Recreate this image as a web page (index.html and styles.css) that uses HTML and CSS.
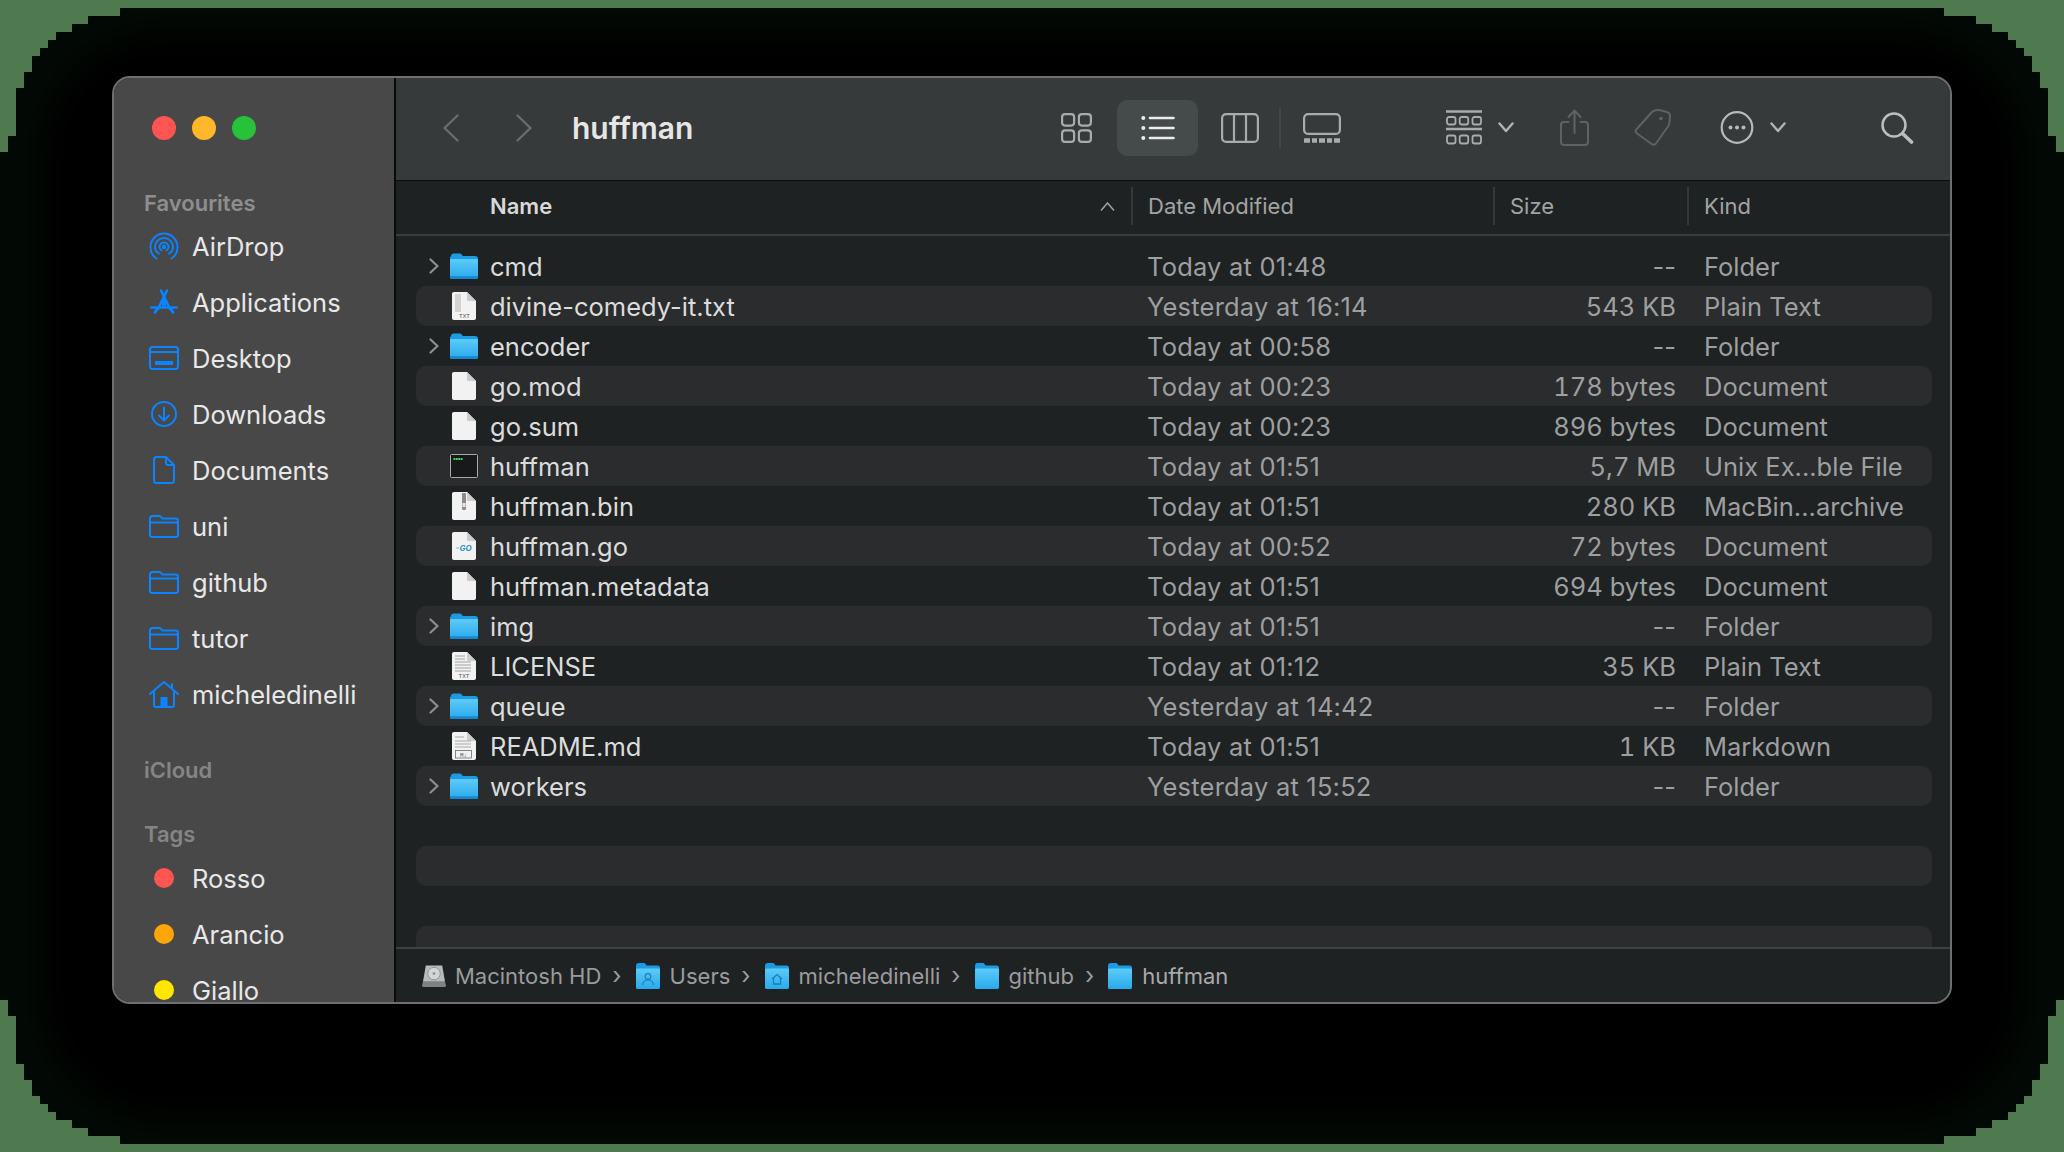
FILE: index.html
```html
<!doctype html>
<html lang="en">
<head>
	<title>huffman</title>
	<meta charset="utf-8">
	<link rel="stylesheet" href="styles.css">
</head>
<body>

	<!-- black pixel backdrop behind the window -->
	<svg class="backdrop" width="2064" height="1152" viewBox="0 0 2064 1152">
		<defs><filter id="soft"><feGaussianBlur stdDeviation="12"/></filter></defs>
		<polygon fill="#020803" points="0,152 8,152 8,136 16,136 16,88 24,88 24,72 32,72 32,56 40,56 40,48 48,48 48,40 56,40 56,32 72,32 72,24 88,24 88,16 120,16 120,8 1944,8 1944,16 1976,16 1976,24 1992,24 1992,32 2008,32 2008,40 2016,40 2016,48 2024,48 2024,56 2032,56 2032,72 2040,72 2040,88 2048,88 2048,136 2056,136 2056,152 2064,152 2064,1000 2056,1000 2056,1016 2048,1016 2048,1064 2040,1064 2040,1080 2032,1080 2032,1096 2024,1096 2024,1104 2016,1104 2016,1112 2008,1112 2008,1120 1992,1120 1992,1128 1976,1128 1976,1136 1944,1136 1944,1144 120,1144 120,1136 88,1136 88,1128 72,1128 72,1120 56,1120 56,1112 48,1112 48,1104 40,1104 40,1096 32,1096 32,1080 24,1080 24,1064 16,1064 16,1016 8,1016 8,1000 0,1000"/>
		<rect x="44" y="36" width="1976" height="1080" rx="120" fill="#000" filter="url(#soft)"/>
	</svg>

	<!-- shared icons -->
	<svg class="defs" width="0" height="0">
		<defs>
			<linearGradient id="folderfill" x1="0" y1="0" x2="0" y2="1">
				<stop offset="0" stop-color="#5ccbf8"/>
				<stop offset="1" stop-color="#2aa9ec"/>
			</linearGradient>
		</defs>
		<symbol id="folder" viewBox="0 0 28 26">
			<path d="M1 3.500C1 1.600 1.800 .5 3.500 .5h6c1.200 0 1.800.5 2.500 1.400l.8 1.100H25c1.500 0 3 .8 3 2.500V24c0 1.200-.8 2-2 2H2c-1.200 0-2-.8-2-2V4z" fill="#1d9be2"/>
			<path d="M0 7.500C0 6.500.6 6 1.600 6h24.800c1 0 1.600.5 1.600 1.500V24c0 1.200-.8 2-2 2H2c-1.200 0-2-.8-2-2z" fill="url(#folderfill)"/>
			<path d="M0 24c0 1.200.8 2 2 2h24c1.200 0 2-.8 2-2v-.8H0z" fill="#1588d0"/>
		</symbol>
		<symbol id="doc" viewBox="0 0 24 28">
			<path d="M2 0h13l9 9v17c0 1.200-.8 2-2 2H2c-1.200 0-2-.8-2-2V2C0 .8.8 0 2 0z" fill="#f2f2f2"/>
			<path d="M15 0l9 9h-7.500c-1 0-1.500-.5-1.500-1.500z" fill="#cdcdcd"/>
		</symbol>
		<symbol id="chevron-r" viewBox="0 0 10 16">
			<path d="M1.500 1.500L8.500 8l-7 6.500" fill="none" stroke="#8d8f90" stroke-width="2.200" stroke-linecap="round" stroke-linejoin="round"/>
		</symbol>
		<symbol id="down" viewBox="0 0 16 11">
			<path d="M1.500 1.500L8 9l6.500-7.500" fill="none" stroke="#b2b4b4" stroke-width="2.400" stroke-linecap="round" stroke-linejoin="round"/>
		</symbol>
		<symbol id="side-folder" viewBox="0 0 30 23">
			<path d="M1 20V3.500C1 2 2 1 3.500 1h6.300c1 0 1.500.3 2.200 1l1.500 1.600H26.500C28 3.600 29 4.600 29 6v14c0 1.200-1 2-2.200 2H3.200C2 22 1 21.200 1 20zM1 7.500h28" fill="none" stroke="#0a84ff" stroke-width="2"/>
		</symbol>
		<symbol id="path-folder" viewBox="0 0 24 26">
			<path d="M0 3C0 1.200 1 0 2.500 0h5c1 0 1.600.4 2.200 1.200l.8 1.300H21.500C23 2.500 24 3.300 24 5v19c0 1.200-.8 2-2 2H2c-1.200 0-2-.8-2-2z" fill="#1d9be2"/>
			<path d="M0 7c0-1 .6-1.500 1.500-1.500h21c.9 0 1.500.5 1.500 1.500v17c0 1.200-.8 2-2 2H2c-1.200 0-2-.8-2-2z" fill="url(#folderfill)"/>
		</symbol>
	</svg>

	<div class="window">

		<aside class="sidebar">
			<div class="lights">
				<span class="light red"></span>
				<span class="light amber"></span>
				<span class="light green"></span>
			</div>

			<h3 class="side-head">Favourites</h3>
			<div class="side-item">
				<span class="side-icon">
					<svg width="30" height="28" viewBox="0 0 30 28" fill="none" stroke="#0a84ff" stroke-width="2" stroke-linecap="round">
						<path d="M7.500 26.500C3.500 24 1.500 19.500 1.500 15a13.500 13.500 0 0 1 27 0c0 4.500-2 9-6 11.500"/>
						<path d="M10 21.500C7.500 20 6 17.500 6 15a9 9 0 0 1 18 0c0 2.500-1.500 5-4 6.500"/>
						<path d="M12.500 18.500C11 17.500 10.500 16.300 10.500 15a4.500 4.500 0 0 1 9 0c0 1.300-.5 2.500-2 3.500"/>
						<circle cx="15" cy="15" r="1.200" fill="#0a84ff"/>
					</svg>
				</span>
				AirDrop
			</div>
			<div class="side-item">
				<span class="side-icon">
					<svg width="28" height="26" viewBox="0 0 28 26" fill="none" stroke="#0a84ff" stroke-width="2.600" stroke-linecap="round">
						<path d="M11 1.500L20 20"/>
						<path d="M17 1.500L8 20"/>
						<path d="M1.500 18.500h25"/>
						<path d="M5 23.500l2-3.500M23 23.500l-2-3.500"/>
						<path d="M10 12l4-3 4 3-3 6h-2z" fill="#0a84ff" stroke="none"/>
					</svg>
				</span>
				Applications
			</div>
			<div class="side-item">
				<span class="side-icon">
					<svg width="30" height="24" viewBox="0 0 30 24" fill="none" stroke="#0a84ff" stroke-width="2">
						<rect x="1" y="1" width="28" height="22" rx="2.500"/>
						<path d="M1 6h28"/>
						<rect x="6" y="15" width="18" height="4" fill="#0a84ff" stroke="none"/>
					</svg>
				</span>
				Desktop
			</div>
			<div class="side-item">
				<span class="side-icon">
					<svg width="26" height="26" viewBox="0 0 26 26" fill="none" stroke="#0a84ff" stroke-width="2" stroke-linecap="round" stroke-linejoin="round">
						<circle cx="13" cy="13" r="12"/>
						<path d="M13 6.500v12.500M8 14.500l5 5 5-5"/>
					</svg>
				</span>
				Downloads
			</div>
			<div class="side-item">
				<span class="side-icon">
					<svg width="22" height="28" viewBox="0 0 22 28" fill="none" stroke="#0a84ff" stroke-width="2" stroke-linejoin="round">
						<path d="M3.500 1H13l8 8v15.500c0 1.500-1 2.500-2.500 2.500h-15C2 27 1 26 1 24.500v-21C1 2 2 1 3.500 1z"/>
						<path d="M13 1v6c0 1.300.7 2 2 2h6"/>
					</svg>
				</span>
				Documents
			</div>
			<div class="side-item">
				<span class="side-icon"><svg class="ic-side-folder"><use href="#side-folder"/></svg></span>
				uni
			</div>
			<div class="side-item">
				<span class="side-icon"><svg class="ic-side-folder"><use href="#side-folder"/></svg></span>
				github
			</div>
			<div class="side-item">
				<span class="side-icon"><svg class="ic-side-folder"><use href="#side-folder"/></svg></span>
				tutor
			</div>
			<div class="side-item">
				<span class="side-icon">
					<svg width="30" height="27" viewBox="0 0 30 27" fill="none" stroke="#0a84ff" stroke-width="2" stroke-linecap="round" stroke-linejoin="round">
						<path d="M1 13L15 1l14 12"/>
						<path d="M5 10.500V24c0 1.300.7 2 2 2h16c1.300 0 2-.7 2-2V10.500"/>
						<rect x="11.500" y="16" width="7" height="10" fill="#0a84ff" stroke="none"/>
						<path d="M23 3v4"/>
					</svg>
				</span>
				micheledinelli
			</div>

			<h3 class="side-head icloud">iCloud</h3>

			<h3 class="side-head tags">Tags</h3>
			<div class="side-item"><span class="side-icon"><span class="tag rosso"></span></span>Rosso</div>
			<div class="side-item"><span class="side-icon"><span class="tag arancio"></span></span>Arancio</div>
			<div class="side-item"><span class="side-icon"><span class="tag giallo"></span></span>Giallo</div>
		</aside>

		<main class="main">

			<header class="toolbar">
				<div class="tb-left">
					<svg class="back" width="16" height="28" viewBox="0 0 16 28" fill="none" stroke="#686c6d" stroke-width="2.400" stroke-linecap="round" stroke-linejoin="round"><path d="M14.500 1.500L1.500 14l13 12.500"/></svg>
					<svg class="forward" width="16" height="28" viewBox="0 0 16 28" fill="none" stroke="#686c6d" stroke-width="2.400" stroke-linecap="round" stroke-linejoin="round"><path d="M1.500 1.500L14.500 14l-13 12.500"/></svg>
					<span class="title">huffman</span>
				</div>

				<div class="views">
					<span class="view">
						<svg width="31" height="30" viewBox="0 0 31 30" fill="none" stroke="#a9acac" stroke-width="2.200">
							<rect x="1.100" y="1.100" width="12" height="11.500" rx="3"/>
							<rect x="17.900" y="1.100" width="12" height="11.500" rx="3"/>
							<rect x="1.100" y="17.400" width="12" height="11.500" rx="3"/>
							<rect x="17.900" y="17.400" width="12" height="11.500" rx="3"/>
						</svg>
					</span>
					<span class="view active">
						<svg width="34" height="24" viewBox="0 0 34 24" fill="none" stroke="#ececec" stroke-width="2.600" stroke-linecap="round">
							<path d="M9 2h23.500M9 12h23.500M9 22h23.500"/>
							<circle cx="2.300" cy="2" r="2" fill="#ececec" stroke="none"/>
							<circle cx="2.300" cy="12" r="2" fill="#ececec" stroke="none"/>
							<circle cx="2.300" cy="22" r="2" fill="#ececec" stroke="none"/>
						</svg>
					</span>
					<span class="view">
						<svg class="columns" width="38" height="30" viewBox="0 0 38 30" fill="none" stroke="#a9acac" stroke-width="2.200">
							<rect x="1.100" y="1.100" width="35.800" height="27.800" rx="4"/>
							<path d="M13 1v28M25 1v28"/>
						</svg>
					</span>
					<span class="view-sep"></span>
					<span class="view">
						<svg width="38" height="30" viewBox="0 0 38 30" fill="none" stroke="#a9acac" stroke-width="2.200">
							<rect x="1.100" y="1.100" width="35.800" height="19.800" rx="4"/>
							<path d="M1 27.500h6M9 27.500h5M16 27.500h6M24 27.500h5M31 27.500h6" stroke-width="4.500"/>
						</svg>
					</span>
				</div>

				<svg class="group" width="36" height="35" viewBox="0 0 36 35" fill="none" stroke="#a9acac">
					<path d="M0 1.500h36M0 19h36" stroke-width="2.600"/>
					<g stroke-width="1.800">
						<rect x="1" y="7" width="8.500" height="7.500" rx="2"/>
						<rect x="13.700" y="7" width="8.500" height="7.500" rx="2"/>
						<rect x="26.500" y="7" width="8.500" height="7.500" rx="2"/>
						<rect x="1" y="25.500" width="8.500" height="8" rx="2"/>
						<rect x="13.700" y="25.500" width="8.500" height="8" rx="2"/>
						<rect x="26.500" y="25.500" width="8.500" height="8" rx="2"/>
					</g>
				</svg>
				<svg class="caret"><use href="#down"/></svg>

				<svg class="share" width="29" height="37" viewBox="0 0 29 37" fill="none" stroke="#5e6263" stroke-width="2" stroke-linecap="round" stroke-linejoin="round">
					<path d="M8.500 13H4c-2 0-3 1-3 3v17c0 2 1 3 3 3h21c2 0 3-1 3-3V16c0-2-1-3-3-3h-4.500"/>
					<path d="M14.500 24V2M8.500 8l6-6.500 6 6.500"/>
				</svg>
				<svg class="tagbtn" width="37" height="37" viewBox="0 0 37 37" fill="none" stroke="#5e6263" stroke-width="2" stroke-linejoin="round">
					<path d="M18 3C20 1 22 .8 25 1L33 3C35 3.500 36 5 36 7L35.500 13C35.400 15 35 16 34 17.500L22 34.500C21 36 19.500 36.200 18 35.200L3 24.500C1.500 23.500 1.300 22 2.300 20.500z"/>
					<circle cx="27" cy="9.500" r="1.800" fill="#5e6263" stroke="none"/>
				</svg>
				<svg class="more" width="34" height="33" viewBox="0 0 34 33" fill="none" stroke="#b8baba" stroke-width="2.200">
					<circle cx="17" cy="16.500" r="15.300"/>
					<g fill="#b8baba" stroke="none">
						<circle cx="10.500" cy="16.500" r="2"/>
						<circle cx="17" cy="16.500" r="2"/>
						<circle cx="23.500" cy="16.500" r="2"/>
					</g>
				</svg>
				<svg class="caret"><use href="#down"/></svg>

				<svg class="search" width="33" height="32" viewBox="0 0 33 32" fill="none" stroke="#bcbebe" stroke-linecap="round">
					<circle cx="13" cy="13" r="11.500" stroke-width="2.500"/>
					<path d="M21.500 21.500l9 8.500" stroke-width="3.600"/>
				</svg>
			</header>

			<div class="head">
				<div class="hcell hname">
					Name
					<svg class="sort" width="15" height="9" viewBox="0 0 15 9" fill="none" stroke="#a0a2a2" stroke-width="1.500"><path d="M1 8.500L7.500 1 14 8.500"/></svg>
				</div>
				<div class="hcell hdate">Date Modified</div>
				<div class="hcell hsize">Size</div>
				<div class="hcell hkind">Kind</div>
			</div>

			<div class="list">
				<div class="row">
					<svg class="disc"><use href="#chevron-r"/></svg><svg class="ic-folder"><use href="#folder"/></svg>
					<span class="name">cmd</span><span class="date">Today at 01:48</span><span class="size none">--</span><span class="kind">Folder</span>
				</div>
				<div class="row">
					<i></i>
					<svg class="ic-file" viewBox="0 0 24 28">
						<use href="#doc"/>
						<path d="M3 3h6M3 5h6M3 7h6M3 9h6M3 11h6M3 13h6M3 15h6M3 17h6M3 19h6" stroke="#b5b5b5" stroke-width="1"/>
						<text class="filetag" x="12.500" y="26" text-anchor="middle">TXT</text>
					</svg>
					<span class="name">divine-comedy-it.txt</span><span class="date">Yesterday at 16:14</span><span class="size">543 KB</span><span class="kind">Plain Text</span>
				</div>
				<div class="row">
					<svg class="disc"><use href="#chevron-r"/></svg><svg class="ic-folder"><use href="#folder"/></svg>
					<span class="name">encoder</span><span class="date">Today at 00:58</span><span class="size none">--</span><span class="kind">Folder</span>
				</div>
				<div class="row">
					<i></i><svg class="ic-file"><use href="#doc"/></svg>
					<span class="name">go.mod</span><span class="date">Today at 00:23</span><span class="size">178 bytes</span><span class="kind">Document</span>
				</div>
				<div class="row">
					<i></i><svg class="ic-file"><use href="#doc"/></svg>
					<span class="name">go.sum</span><span class="date">Today at 00:23</span><span class="size">896 bytes</span><span class="kind">Document</span>
				</div>
				<div class="row">
					<i></i>
					<svg class="ic-exec" viewBox="0 0 28 24">
						<rect x=".5" y=".5" width="27" height="23" rx="1" fill="#17191a" stroke="#a9abab"/>
						<path d="M3.500 5h9" stroke="#3fe060" stroke-width="2" stroke-dasharray="1.800 .6"/>
					</svg>
					<span class="name">huffman</span><span class="date">Today at 01:51</span><span class="size">5,7 MB</span><span class="kind">Unix Ex...ble File</span>
				</div>
				<div class="row">
					<i></i>
					<svg class="ic-file" viewBox="0 0 24 28">
						<use href="#doc"/>
						<rect x="10" y="1" width="4" height="17" rx="1" fill="#8b8b8b"/>
						<rect x="10.500" y="11" width="3" height="4" fill="#e8e8e8"/>
					</svg>
					<span class="name">huffman.bin</span><span class="date">Today at 01:51</span><span class="size">280 KB</span><span class="kind">MacBin...archive</span>
				</div>
				<div class="row">
					<i></i>
					<svg class="ic-file" viewBox="0 0 24 28">
						<use href="#doc"/>
						<path d="M4 16h3" stroke="#6cb9df" stroke-width="1"/>
						<text class="gotag" x="13.500" y="19" text-anchor="middle">GO</text>
					</svg>
					<span class="name">huffman.go</span><span class="date">Today at 00:52</span><span class="size">72 bytes</span><span class="kind">Document</span>
				</div>
				<div class="row">
					<i></i><svg class="ic-file"><use href="#doc"/></svg>
					<span class="name">huffman.metadata</span><span class="date">Today at 01:51</span><span class="size">694 bytes</span><span class="kind">Document</span>
				</div>
				<div class="row">
					<svg class="disc"><use href="#chevron-r"/></svg><svg class="ic-folder"><use href="#folder"/></svg>
					<span class="name">img</span><span class="date">Today at 01:51</span><span class="size none">--</span><span class="kind">Folder</span>
				</div>
				<div class="row">
					<i></i>
					<svg class="ic-file" viewBox="0 0 24 28">
						<use href="#doc"/>
						<path d="M3 4h10M3 7h10M3 10h16M3 13h16M3 16h16M3 19h16" stroke="#bdbdbd" stroke-width="1.400"/>
						<text class="filetag" x="12" y="26" text-anchor="middle">TXT</text>
					</svg>
					<span class="name">LICENSE</span><span class="date">Today at 01:12</span><span class="size">35 KB</span><span class="kind">Plain Text</span>
				</div>
				<div class="row">
					<svg class="disc"><use href="#chevron-r"/></svg><svg class="ic-folder"><use href="#folder"/></svg>
					<span class="name">queue</span><span class="date">Yesterday at 14:42</span><span class="size none">--</span><span class="kind">Folder</span>
				</div>
				<div class="row">
					<i></i>
					<svg class="ic-file" viewBox="0 0 24 28">
						<use href="#doc"/>
						<path d="M3 5h9M3 9h16M3 12h16M3 15h16" stroke="#a9a9a9" stroke-width="1"/>
						<rect x="3.500" y="18.500" width="16" height="7.500" fill="none" stroke="#6a6a6a" stroke-width=".8"/>
						<text class="filetag" x="11.500" y="25" text-anchor="middle">M↓</text>
					</svg>
					<span class="name">README.md</span><span class="date">Today at 01:51</span><span class="size">1 KB</span><span class="kind">Markdown</span>
				</div>
				<div class="row">
					<svg class="disc"><use href="#chevron-r"/></svg><svg class="ic-folder"><use href="#folder"/></svg>
					<span class="name">workers</span><span class="date">Yesterday at 15:52</span><span class="size none">--</span><span class="kind">Folder</span>
				</div>
				<div class="row"></div>
				<div class="row"></div>
				<div class="row"></div>
				<div class="row"></div>
			</div>

			<footer class="pathbar">
				<svg class="crumb-icon disk" width="25" height="24" viewBox="0 0 25 24">
					<path d="M4 1h17l3 17H1z" fill="#b9bbbb"/>
					<circle cx="12.500" cy="9.500" r="6.500" fill="#d4d5d5" stroke="#8f9191"/>
					<circle cx="12.500" cy="9.500" r="1.500" fill="#8f9191"/>
					<path d="M1 18h23l1 4c0 1-.5 1.500-1.500 1.500h-22C.5 23.500 0 23 0 22z" fill="#7f8282"/>
				</svg>
				<span class="crumb">Macintosh HD</span><span class="sep">›</span>
				<svg class="crumb-icon" viewBox="0 0 24 26">
					<use href="#path-folder"/>
					<circle cx="12" cy="13.500" r="2.800" fill="none" stroke="#1a7fc0" stroke-width="1.200"/>
					<path d="M6.500 22c.5-3.500 2.500-5 5.500-5s5 1.500 5.500 5" fill="none" stroke="#1a7fc0" stroke-width="1.200"/>
				</svg>
				<span class="crumb">Users</span><span class="sep">›</span>
				<svg class="crumb-icon" viewBox="0 0 24 26">
					<use href="#path-folder"/>
					<path d="M7 16l5-4.500 5 4.500M8.500 15v6h7v-6" fill="none" stroke="#1a7fc0" stroke-width="1.300"/>
				</svg>
				<span class="crumb">micheledinelli</span><span class="sep">›</span>
				<svg class="crumb-icon"><use href="#path-folder"/></svg>
				<span class="crumb">github</span><span class="sep">›</span>
				<svg class="crumb-icon"><use href="#path-folder"/></svg>
				<span class="crumb last">huffman</span>
			</footer>

		</main>
	</div>

</body>
</html>
```
FILE: styles.css
```css
html, body { height: 100%; }
body {
	margin: 0;
	background: #4f7a50;
	padding: 76px 112px;
	box-sizing: border-box;
	overflow: hidden;
	font-family: Inter, "Noto Sans", sans-serif;
}
svg { display: block; flex: none; }
.backdrop { position: absolute; top: 0; left: 0; }
.defs { position: absolute; }

.window {
	position: relative;
	display: flex;
	width: 1840px;
	height: 928px;
	box-sizing: border-box;
	border: 2px solid #6f6f6f;
	border-radius: 18px;
	overflow: hidden;
	background: #1f2223;
}

/* sidebar */
.sidebar {
	width: 280px;
	flex: none;
	background: #484848;
	border-right: 2px solid #0b0b0b;
	overflow: hidden;
}
.lights {
	display: flex;
	gap: 16px;
	height: 24px;
	padding: 38px 0 49px 38px;
}
.light { width: 24px; height: 24px; border-radius: 50%; }
.light.red { background: #fd5551; }
.light.amber { background: #fdb728; }
.light.green { background: #27c13a; }

.side-head {
	margin: 0 0 1px 30px;
	height: 28px;
	line-height: 28px;
	font-size: 22px;
	font-weight: 600;
	color: #8e8e8e;
}
.side-head.icloud { margin-top: 34px; margin-bottom: 0; color: #858585; }
.side-head.tags { margin-top: 36px; margin-bottom: 2px; color: #858585; }

.side-item {
	display: flex;
	align-items: center;
	gap: 12px;
	height: 56px;
	padding-left: 34px;
	font-size: 25.500px;
	color: #e8e8e8;
}
.side-icon {
	display: flex;
	align-items: center;
	justify-content: center;
	width: 32px;
}
.ic-side-folder { width: 30px; height: 23px; }
.tag { width: 20px; height: 20px; border-radius: 50%; }
.tag.rosso { background: #fd5550; }
.tag.arancio { background: #fda50a; }
.tag.giallo { background: #ffe600; }

/* main */
.main {
	flex: 1;
	display: flex;
	flex-direction: column;
	min-width: 0;
}
.toolbar {
	display: flex;
	align-items: center;
	flex: none;
	box-sizing: border-box;
	height: 103px;
	padding-bottom: 3px;
	background: #363a3b;
	border-bottom: 1px solid #0d0e0e;
}
.tb-left {
	display: flex;
	align-items: center;
	width: 593px;
	padding-left: 47px;
}
.forward { margin-left: 57px; }
.title {
	margin-left: 40px;
	font-size: 30px;
	font-weight: 600;
	color: #e6e6e6;
}
.views { display: flex; align-items: center; }
.view {
	display: flex;
	align-items: center;
	justify-content: center;
	width: 81px;
	height: 56px;
}
.view.active { background: #454a4b; border-radius: 10px; }
.view-sep { width: 2px; height: 40px; background: #434748; }
.columns { margin-left: 2px; }

.group { margin-left: 84px; }
.caret { width: 16px; height: 11px; margin-left: 16px; }
.share { margin-left: 46px; }
.tagbtn { margin-left: 45px; }
.more { margin-left: 49px; }
.search { margin-left: auto; margin-right: 36px; }

/* column headers */
.head {
	display: flex;
	align-items: center;
	flex: none;
	height: 50px;
	padding-bottom: 3px;
	background: #1f2223;
	border-bottom: 2px solid #3a3d3e;
	font-size: 22px;
	color: #a2a4a4;
}
.hcell {
	display: flex;
	align-items: center;
	height: 38px;
	box-sizing: border-box;
	padding-left: 15px;
	border-left: 2px solid #36393a;
}
.hname {
	width: 735px;
	padding-left: 94px;
	padding-right: 16px;
	border-left: 0;
	font-weight: 600;
	color: #d8d8d8;
}
.sort { margin-left: auto; }
.hdate { width: 362px; }
.hsize { width: 194px; }
.hkind { flex: 1; }

/* rows */
.list {
	flex: 1;
	min-height: 0;
	overflow: hidden;
	padding: 10px 18px 0 20px;
}
.row {
	display: grid;
	grid-template-columns: 34px 28px 669px 360px 169px 1fr;
	align-items: center;
	height: 40px;
	font-size: 25.500px;
	color: #9d9fa0;
}
.row:nth-child(even) { background: #2a2c2d; border-radius: 10px; }
.row i { display: block; }
.disc { width: 10px; height: 16px; margin-left: 13px; }
.ic-folder { width: 28px; height: 26px; }
.ic-file { width: 24px; height: 28px; margin-left: 2px; }
.ic-exec { width: 28px; height: 24px; }
.name { padding-left: 12px; color: #dcdcdc; }
.date { letter-spacing: .2px; }
.size { text-align: right; font-variant-numeric: tabular-nums; }
.size.none { font-variant-numeric: normal; }
.kind { padding-left: 28px; white-space: nowrap; }
.filetag { font: 500 6px "Liberation Mono", monospace; fill: #555; }
.gotag { font: italic 700 8px Inter, sans-serif; fill: #2f93c9; }

/* path bar */
.pathbar {
	display: flex;
	align-items: center;
	flex: none;
	height: 53px;
	padding-left: 26px;
	background: #1f2223;
	border-top: 2px solid #3e4142;
	font-size: 22px;
	color: #9a9c9d;
}
.crumb-icon { width: 24px; height: 26px; margin-right: 10px; }
.crumb-icon.disk { margin-right: 9px; }
.sep { margin: 0 14px 0 11px; font-size: 24px; }
.crumb.last { color: #a8aaab; }
```
